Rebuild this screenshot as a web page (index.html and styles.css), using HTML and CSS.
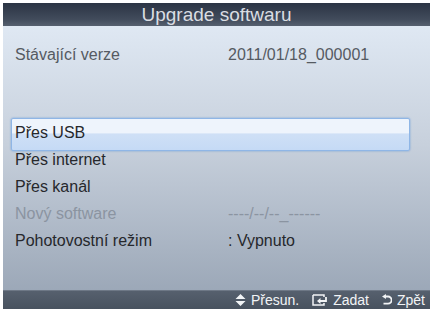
FILE: index.html
```html
<!DOCTYPE html>
<html lang="cs">
<head>
    <meta charset="UTF-8">
    <meta name="viewport" content="width=device-width, initial-scale=1.0">
    <title>Upgrade softwaru</title>
    <link rel="stylesheet" href="styles.css">
</head>
<body>
    <div class="screen">
        <div class="title-bar">Upgrade softwaru</div>
        <div class="content">
            <div class="info-row">
                <span class="label">Stávající verze</span>
                <span class="value">2011/01/18_000001</span>
            </div>
            <ul class="menu">
                <li class="menu-item selected"><span class="label">Přes USB</span></li>
                <li class="menu-item"><span class="label">Přes internet</span></li>
                <li class="menu-item"><span class="label">Přes kanál</span></li>
                <li class="menu-item disabled">
                    <span class="label">Nový software</span>
                    <span class="value">----/--/--_------</span>
                </li>
                <li class="menu-item">
                    <span class="label">Pohotovostní režim</span>
                    <span class="value">: Vypnuto</span>
                </li>
            </ul>
        </div>
        <div class="footer">
            <span class="hint">
                <svg class="icon" width="11" height="12" viewBox="0 0 11 12">
                    <path d="M5.5 0 L10.5 5 L0.5 5 Z M0.5 7 L10.5 7 L5.5 12 Z" fill="#f2f4f6"/>
                </svg>
                Přesun.
            </span>
            <span class="hint">
                <svg class="icon" width="16" height="12" viewBox="0 0 16 12">
                    <path d="M1 1 H12 V3 M1 1 V11 H12 V9" fill="none" stroke="#f2f4f6" stroke-width="1.5"/>
                    <path d="M14 3 V7 H7" fill="none" stroke="#f2f4f6" stroke-width="1.8"/>
                    <path d="M5 7 L8.5 4 L8.5 10 Z" fill="#f2f4f6"/>
                </svg>
                Zadat
            </span>
            <span class="hint">
                <svg class="icon" width="10" height="12" viewBox="0 0 10 12">
                    <path d="M3 2.5 H6 A3.6 3.6 0 0 1 6 9.7 H1.5" fill="none" stroke="#f2f4f6" stroke-width="1.8"/>
                    <path d="M0 2.5 L4 0 L4 5 Z" fill="#f2f4f6"/>
                </svg>
                Zpět
            </span>
        </div>
    </div>
</body>
</html>
```

FILE: styles.css
```css
body {
    margin: 0;
    background: #ffffff;
    font-family: "Liberation Sans", Arial, sans-serif;
}

.screen {
    width: 427px;
    height: 306px;
    margin: 3px 0 0 3px;
    display: flex;
    flex-direction: column;
}

.title-bar {
    height: 23px;
    line-height: 23px;
    text-align: center;
    font-size: 19px;
    color: #dadde2;
    background: linear-gradient(#2b3444, #414b5b 70%, #56606f);
}

.content {
    flex: 1;
    background: linear-gradient(#dfe8f3, #c7d0dc 45%, #9ca8b8);
    padding-top: 15px;
}

.info-row,
.menu-item {
    display: flex;
    align-items: center;
    height: 27px;
    font-size: 16px;
    color: #26282c;
}

.label {
    width: 213px;
    padding-left: 12px;
}

.info-row .label,
.info-row .value {
    color: #555a62;
}

.menu {
    list-style: none;
    margin: 51px 0 0 0;
    padding: 0;
}

.menu-item {
    position: relative;
}

.menu-item .label,
.menu-item .value {
    position: relative;
}

.selected::before {
    content: "";
    position: absolute;
    left: 8px;
    right: 20px;
    top: -1px;
    bottom: -5px;
    border: 1px solid #8fb6e6;
    border-radius: 2px;
    background: linear-gradient(#eef4fc 45%, #cfe0f6 48%, #c5daf5);
    box-shadow: 0 0 2px #6d9bd6;
}

.disabled {
    color: #8b94a1;
}

.footer {
    height: 18px;
    display: flex;
    justify-content: flex-end;
    align-items: center;
    gap: 13px;
    padding-right: 5px;
    font-size: 14px;
    color: #f2f4f6;
    background: linear-gradient(#56606e, #48525f);
    border-top: 1px solid #6e7886;
}

.hint {
    display: flex;
    align-items: center;
    gap: 5px;
}

.icon {
    display: block;
}
```
